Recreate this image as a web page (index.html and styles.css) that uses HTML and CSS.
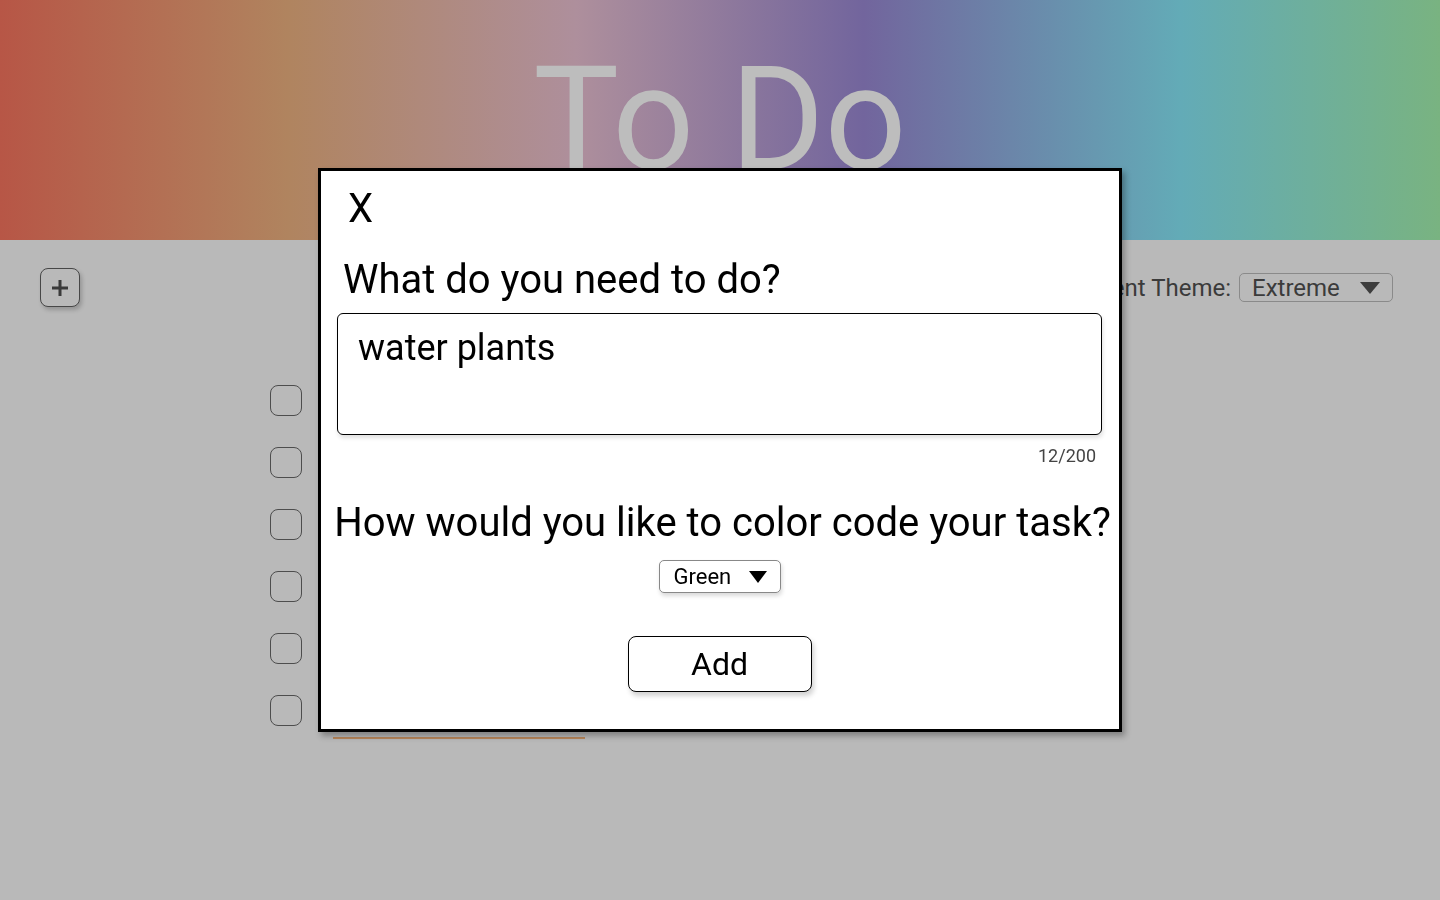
FILE: index.html
```html
<!DOCTYPE html>
<html>
<head>
<meta charset="utf-8">
<title>To Do</title>
<link rel="stylesheet" href="styles.css">
</head>
<body>
<header class="hero">
  <h1 class="title">To Do</h1>
</header>
<main class="page">
  <div class="toolbar">
    <button class="add-btn" aria-label="Add task">
      <svg width="20" height="20" viewBox="0 0 20 20"><path d="M10 2v16M2 10h16" stroke="#3a3a3a" stroke-width="3" fill="none"/></svg>
    </button>
    <div class="theme">
      <span class="theme-label">Current Theme:</span>
      <div class="theme-select"><span>Extreme</span><svg width="20" height="12" viewBox="0 0 20 12"><path d="M0 0h20L10 12z" fill="#3d3d3d"/></svg></div>
    </div>
  </div>
  <ul class="tasks">
    <li class="task"><span class="check"></span><span class="task-text"></span></li>
    <li class="task"><span class="check"></span><span class="task-text"></span></li>
    <li class="task"><span class="check"></span><span class="task-text"></span></li>
    <li class="task"><span class="check"></span><span class="task-text"></span></li>
    <li class="task"><span class="check"></span><span class="task-text"></span></li>
    <li class="task last"><span class="check"></span><span class="task-text"></span></li>
  </ul>
</main>
<div class="modal">
  <div class="close">X</div>
  <h2 class="q1">What do you need to do?</h2>
  <div class="field">water plants</div>
  <div class="counter">12/200</div>
  <h2 class="q2">How would you like to color code your task?</h2>
  <div class="color-row">
    <div class="color-select"><span>Green</span><svg width="18" height="12" viewBox="0 0 18 12"><path d="M0 0h18L9 12z" fill="#000"/></svg></div>
  </div>
  <div class="btn-row"><button class="add">Add</button></div>
</div>
</body>
</html>
```
FILE: styles.css
```css
* { box-sizing: border-box; }
html, body { margin: 0; padding: 0; }
body {
  font-family: Roboto, "Liberation Sans", sans-serif;
  background: #b9b9b9;
  width: 1440px;
  height: 900px;
  overflow: hidden;
}
.hero {
  height: 240px;
  background: linear-gradient(90deg, #b75646 0%, #b0845f 20%, #ae8f9c 40%, #72659d 60%, #63abb7 82%, #79b381 100%);
  overflow: hidden;
}
.title {
  margin: 0;
  padding-top: 48px;
  text-align: center;
  font-weight: 400;
  font-size: 144px;
  line-height: 1;
  color: #bdbdbd;
}
.page { position: relative; }
.toolbar {
  display: flex;
  justify-content: space-between;
  align-items: center;
  padding: 28px 47px 0 40px;
}
.add-btn {
  width: 40px;
  height: 39px;
  border: 1.5px solid #474747;
  border-radius: 8px;
  background: #b9b9b9;
  box-shadow: 2px 3px 4px rgba(0,0,0,0.2);
  display: flex;
  align-items: center;
  justify-content: center;
  padding: 0;
}
.theme { display: flex; align-items: center; gap: 8px; }
.theme-label { font-size: 24px; color: #3b3b3b; }
.theme-select {
  width: 154px;
  height: 29px;
  border: 1px solid #8a8a8a;
  border-radius: 5px;
  display: flex;
  align-items: center;
  justify-content: space-between;
  padding: 0 12px 0 12px;
  font-size: 24px;
  color: #3b3b3b;
}
.tasks {
  list-style: none;
  margin: 0;
  padding: 62px 0 0 270px;
}
.task { display: flex; align-items: center; height: 62px; }
.check {
  width: 32px;
  height: 31px;
  border: 1px solid #4d4d4d;
  border-radius: 8px;
}
.task-text {
  margin-left: 31px;
  width: 252px;
  height: 30px;
}
.task.last .task-text { border-bottom: 2px solid #b8865a; align-self: flex-end; height: 24px; margin-bottom: 2px; }

.modal {
  position: fixed;
  left: 318px;
  top: 168px;
  width: 804px;
  height: 564px;
  background: #fff;
  border: 3px solid #000;
  box-shadow: 3px 4px 6px rgba(0,0,0,0.3);
  padding: 0 17px 0 16px;
  color: #000;
}
.close {
  font-size: 40px;
  line-height: 1;
  margin: 18px 0 0 11px;
  width: 30px;
}
.q1 {
  margin: 31px 0 0 6px;
  font-weight: 400;
  font-size: 40px;
  line-height: 1;
}
.field {
  margin-top: 13px;
  height: 122px;
  border: 1px solid #000;
  border-radius: 6px;
  box-shadow: 1px 3px 4px rgba(0,0,0,0.12);
  padding: 13px 20px;
  font-size: 36px;
  line-height: 1.2;
}
.counter {
  text-align: right;
  padding-right: 6px;
  font-size: 18px;
  color: #444;
  margin-top: 10px;
}
.q2 {
  margin: 37px -17px 0 -11px;
  text-align: center;
  font-weight: 400;
  font-size: 40px;
  line-height: 1;
  white-space: nowrap;
}
.color-row { display: flex; justify-content: center; margin-top: 17px; }
.color-select {
  width: 122px;
  height: 33px;
  border: 1px solid #888;
  border-radius: 5px;
  box-shadow: 1px 3px 4px rgba(0,0,0,0.15);
  display: flex;
  align-items: center;
  justify-content: space-between;
  padding: 0 13px 0 14px;
  font-size: 22px;
}
.btn-row { display: flex; justify-content: center; margin-top: 43px; }
.add {
  width: 184px;
  height: 56px;
  border: 1px solid #000;
  border-radius: 8px;
  background: #fff;
  box-shadow: 2px 4px 5px rgba(0,0,0,0.18);
  font-family: inherit;
  font-size: 32px;
  color: #000;
  padding: 0;
}
```
